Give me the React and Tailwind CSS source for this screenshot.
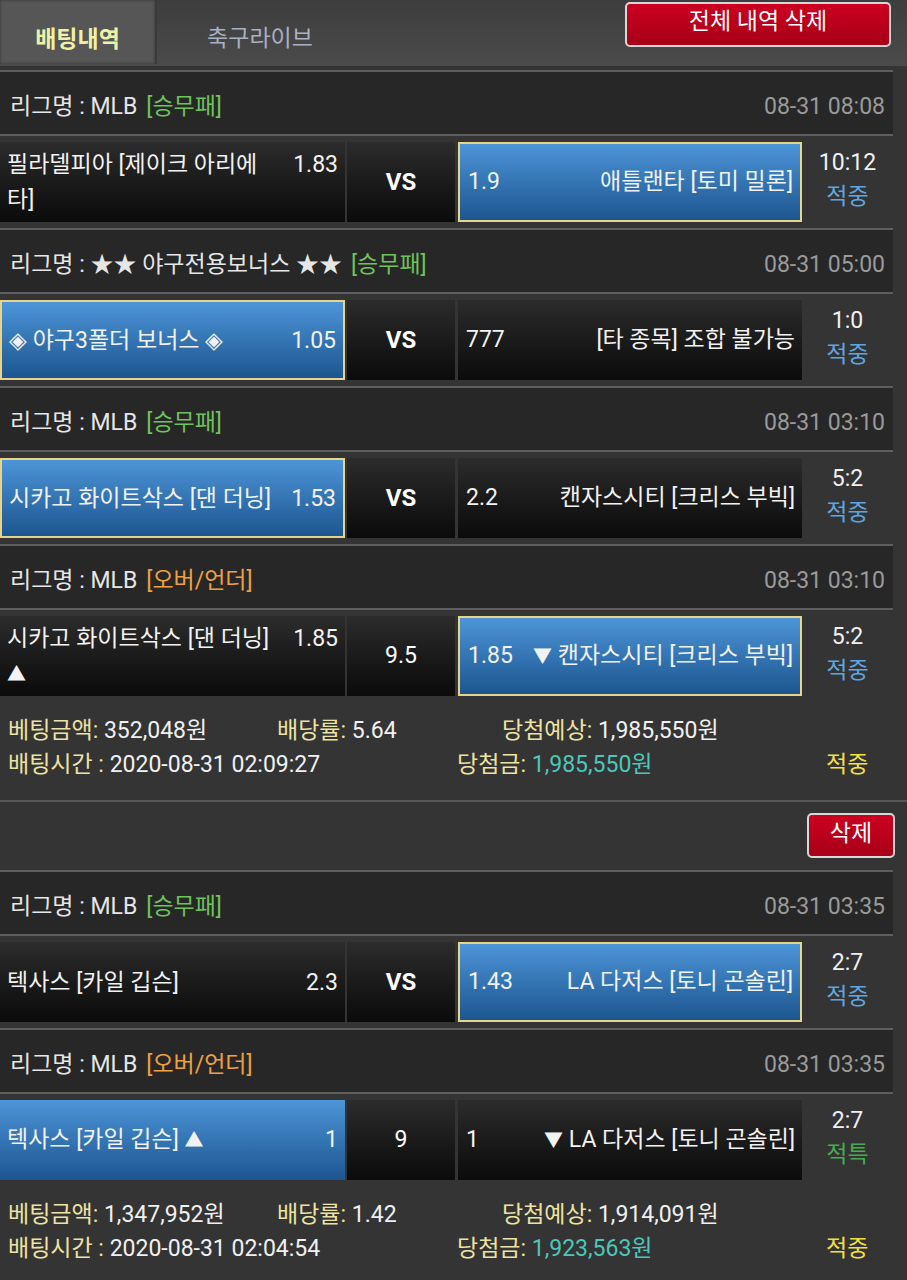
import React from "react";

const slips = [
  {
    bets: [
      {
        league: "MLB",
        type: "[승무패]",
        typeColor: "text-[#6fc25c]",
        date: "08-31 08:08",
        home: { name: "필라델피아 [제이크 아리에타]", odds: "1.83" },
        mid: "VS",
        away: { name: "애틀랜타 [토미 밀론]", odds: "1.9", pick: true },
        score: "10:12",
        status: "적중",
      },
      {
        league: "★★ 야구전용보너스 ★★",
        type: "[승무패]",
        typeColor: "text-[#6fc25c]",
        date: "08-31 05:00",
        home: { name: "◈ 야구3폴더 보너스 ◈", odds: "1.05", pick: true },
        mid: "VS",
        away: { name: "[타 종목] 조합 불가능", odds: "777" },
        score: "1:0",
        status: "적중",
      },
      {
        league: "MLB",
        type: "[승무패]",
        typeColor: "text-[#6fc25c]",
        date: "08-31 03:10",
        home: { name: "시카고 화이트삭스 [댄 더닝]", odds: "1.53", pick: true },
        mid: "VS",
        away: { name: "캔자스시티 [크리스 부빅]", odds: "2.2" },
        score: "5:2",
        status: "적중",
      },
      {
        league: "MLB",
        type: "[오버/언더]",
        typeColor: "text-[#f0a040]",
        date: "08-31 03:10",
        home: { name: "시카고 화이트삭스 [댄 더닝]", odds: "1.85", up: true },
        mid: "9.5",
        away: { name: "캔자스시티 [크리스 부빅]", odds: "1.85", pick: true, down: true },
        score: "5:2",
        status: "적중",
      },
    ],
    amount: "352,048원",
    rate: "5.64",
    expect: "1,985,550원",
    time: "2020-08-31 02:09:27",
    win: "1,985,550원",
    result: "적중",
  },
  {
    bets: [
      {
        league: "MLB",
        type: "[승무패]",
        typeColor: "text-[#6fc25c]",
        date: "08-31 03:35",
        home: { name: "텍사스 [카일 깁슨]", odds: "2.3" },
        mid: "VS",
        away: { name: "LA 다저스 [토니 곤솔린]", odds: "1.43", pick: true },
        score: "2:7",
        status: "적중",
      },
      {
        league: "MLB",
        type: "[오버/언더]",
        typeColor: "text-[#f0a040]",
        date: "08-31 03:35",
        home: { name: "텍사스 [카일 깁슨]", odds: "1", blue: true, up: true },
        mid: "9",
        away: { name: "LA 다저스 [토니 곤솔린]", odds: "1", down: true },
        score: "2:7",
        status: "적특",
      },
    ],
    amount: "1,347,952원",
    rate: "1.42",
    expect: "1,914,091원",
    time: "2020-08-31 02:04:54",
    win: "1,923,563원",
    result: "적중",
    deleteButton: true,
  },
];

function cellBg(side) {
  if (side.pick)
    return "bg-gradient-to-b from-[#4d95d8] to-[#1c5690] border-2 border-[#e6d48a]";
  if (side.blue) return "bg-gradient-to-b from-[#4d95d8] to-[#1c5690]";
  return "bg-gradient-to-b from-[#2c2c2c] to-[#0b0b0b]";
}

function Line() {
  return <div className="h-[2px] w-[893px] bg-[#5e5e5e]" />;
}

function BetRow({ bet }) {
  return (
    <>
      <Line />
      <div className="h-[62px] w-[893px] bg-[#272727] flex items-center justify-between pl-[10px] pr-[8px] pt-[8px]">
        <div className="text-[#e6e6e6]">
          리그명 : {bet.league}
          <span className={`ml-[9px] ${bet.typeColor}`}>{bet.type}</span>
        </div>
        <div className="text-[#9a9a9a]">{bet.date}</div>
      </div>
      <Line />
      <div className="h-[92px] w-[893px] flex items-center">
        <div className={`w-[345px] h-[80px] flex items-center pl-[7px] pr-[7px] text-[#f2f2f2] ${cellBg(bet.home)}`}>
          <div className="w-full leading-[35px]">
            <span className="float-right">{bet.home.odds}</span>
            <div className="w-[268px]">
              {bet.home.name}
              {bet.home.up && (
                <>
                  {" "}
                  <span className="text-[19px]">▲</span>
                </>
              )}
            </div>
          </div>
        </div>
        <div className={`ml-[2px] w-[108px] h-[80px] flex items-center justify-center text-white bg-gradient-to-b from-[#2c2c2c] to-[#0b0b0b] ${bet.mid === "VS" ? "font-bold text-[24px]" : ""}`}>
          {bet.mid}
        </div>
        <div className={`ml-[3px] w-[344px] h-[80px] flex items-center justify-between pl-[8px] pr-[7px] text-[#f2f2f2] ${cellBg(bet.away)}`}>
          <span>{bet.away.odds}</span>
          <span>
            {bet.away.down && (
              <>
                <span className="text-[19px]">▼</span>{" "}
              </>
            )}
            {bet.away.name}
          </span>
        </div>
        <div className="flex-1 flex flex-col items-center -mt-[5px] leading-[34px]">
          <span className="text-[#f0f0f0]">{bet.score}</span>
          <span className={bet.status === "적특" ? "text-[#45ad4e]" : "text-[#5ea6e0]"}>
            {bet.status}
          </span>
        </div>
      </div>
    </>
  );
}

function Summary({ slip }) {
  const label = "text-[#ede3a2]";
  return (
    <div className="h-[98px] pt-[12px] pl-[8px] text-[#f0f0f0]">
      <div className="h-[34px] flex items-center">
        <span className="w-[269px]">
          <span className={label}>베팅금액:</span> {slip.amount}
        </span>
        <span className="w-[225px]">
          <span className={label}>배당률:</span> {slip.rate}
        </span>
        <span>
          <span className={label}>당첨예상:</span> {slip.expect}
        </span>
      </div>
      <div className="h-[34px] flex items-center">
        <span className="w-[449px]">
          <span className={label}>배팅시간 :</span> {slip.time}
        </span>
        <span className="w-[369px]">
          <span className={label}>당첨금:</span>{" "}
          <span className="text-[#4cc6bb]">{slip.win}</span>
        </span>
        <span className="text-[#f2e045]">{slip.result}</span>
      </div>
    </div>
  );
}

export default function App() {
  return (
    <div className="min-h-screen bg-[#343434] text-[23px] font-['Roboto','Noto_Sans_CJK_KR',sans-serif] overflow-hidden">
      <div className="h-[66px] flex bg-gradient-to-b from-[#3d3d3d] to-[#4b4b4b]">
        <div className="w-[157px] h-[64px] bg-[#565656] border-r-2 border-[#3a3a3a] shadow-[inset_0_0_3px_rgba(0,0,0,0.4)] flex items-center justify-center pt-[16px] font-bold text-[#eef2a6]">
          배팅내역
        </div>
        <div className="w-[206px] flex items-center justify-center pt-[12px] text-[#a8b0c2]">
          축구라이브
        </div>
        <div className="ml-auto mr-[16px] mt-[2px]">
          <button className="w-[266px] h-[45px] rounded-[5px] border-2 border-[#d8d8d8] bg-gradient-to-b from-[#cc0020] to-[#a80018] text-white text-[23px] pb-[4px]">
            전체 내역 삭제
          </button>
        </div>
      </div>
      <div className="h-[4px]" />

      {slips.map((slip, i) => (
        <div key={i}>
          {slip.deleteButton && (
            <div className="h-[68px] flex items-start justify-end pt-[11px] pr-[12px]">
              <button className="w-[88px] h-[45px] rounded-[5px] border-2 border-[#d8d8d8] bg-gradient-to-b from-[#cc0020] to-[#a80018] text-white text-[23px] pb-[2px]">
                삭제
              </button>
            </div>
          )}
          {slip.bets.map((bet, j) => (
            <BetRow key={j} bet={bet} />
          ))}
          <Summary slip={slip} />
          {i === 0 && <div className="h-[2px] w-full bg-[#575757]" />}
        </div>
      ))}
    </div>
  );
}
